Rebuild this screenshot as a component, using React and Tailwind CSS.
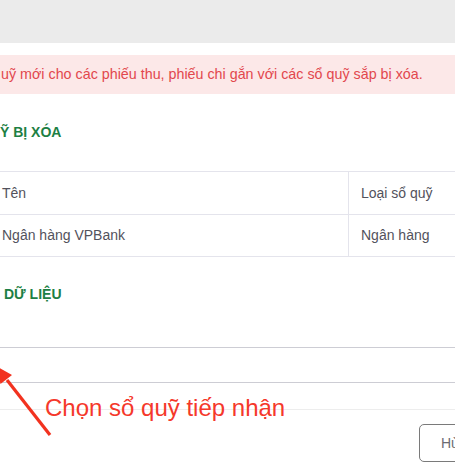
import React from "react";

export default function App() {
  return (
    <div
      className="relative w-[455px] h-[475px] overflow-hidden bg-white"
      style={{ fontFamily: '"Liberation Sans", Arial, sans-serif' }}
    >
      <div className="h-[43px] bg-[#ebebeb]" />
      <div className="mt-[12px] h-[39px] bg-[#fce8e8] flex items-center whitespace-nowrap">
        <span className="text-[14.3px] text-[#e2474d] pl-[1px]">
          uỹ mới cho các phiếu thu, phiếu chi gắn với các sổ quỹ sắp bị xóa.
        </span>
      </div>
      <div className="mt-[30px] h-[16px] leading-[16px] text-[14px] font-bold text-[#1d8044] whitespace-nowrap">
        Ỹ BỊ XÓA
      </div>
      <div className="mt-[31px] border-t border-[#e4e4ec] text-[14px] text-[#52525c]">
        <div className="flex h-[43px] border-b border-[#e4e4ec]">
          <div className="w-[349px] border-r border-[#e4e4ec] flex items-center pl-[2px]">Tên</div>
          <div className="flex-1 flex items-center pl-[12px] whitespace-nowrap">Loại sổ quỹ</div>
        </div>
        <div className="flex h-[42px] border-b border-[#e4e4ec]">
          <div className="w-[349px] border-r border-[#e4e4ec] flex items-center pl-[2px]">Ngân hàng VPBank</div>
          <div className="flex-1 flex items-center pl-[12px] whitespace-nowrap">Ngân hàng</div>
        </div>
      </div>
      <div className="mt-[29px] h-[16px] leading-[16px] text-[14px] font-bold text-[#1d8044] whitespace-nowrap pl-[4px]">
        DỮ LIỆU
      </div>
      <div className="mt-[45px] h-[36px] border-y border-[#cdcdd4]" />
      <div className="mt-[26px] border-t border-[#ededed]" />
      <div className="mt-[14px] flex">
        <div className="ml-[419px] h-[38px] w-[90px] shrink-0 rounded-[5px] border border-[#7a7a7a] flex items-center pl-[21px] text-[14px] text-[#6b6b72]">
          Hủy
        </div>
      </div>

      <svg className="absolute left-0 top-0" width="455" height="475">
        <line x1="50" y1="435" x2="7" y2="380" stroke="#f2321f" strokeWidth="3.2" />
        <polygon points="-4,366 12,375 0.5,384" fill="#f2321f" />
      </svg>
      <div className="absolute left-[45px] top-[393px] text-[24px] leading-[30px] text-[#f5382b] whitespace-nowrap">
        Chọn sổ quỹ tiếp nhận
      </div>
    </div>
  );
}
